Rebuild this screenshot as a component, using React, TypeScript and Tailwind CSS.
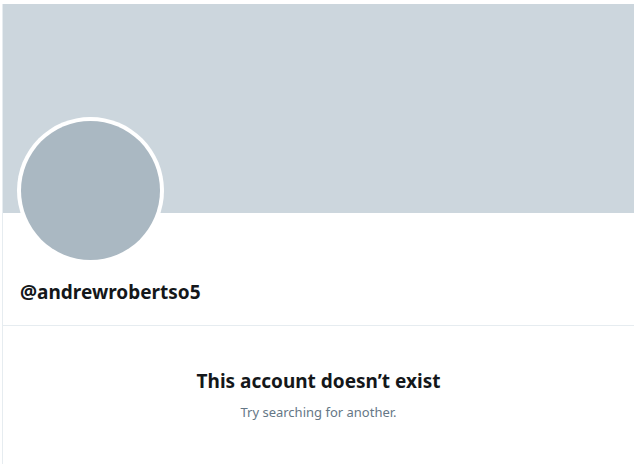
export default function App() {
	return (
		<div className="w-[634px] h-[464px] bg-white pt-1 overflow-hidden" style={{ fontFamily: '"Noto Sans", "Open Sans", sans-serif' }}>
			<div className="ml-[2px] h-full border-l border-[#e6ecf0] flex flex-col">
				{/* Баннер */}
				<div className="h-[209px] bg-[#ccd6dd] shrink-0" />

				{/* Аватар и имя */}
				<div className="relative px-[17px] pt-[67px] pb-[21px] border-b border-[#e6ecf0]">
					<div className="absolute left-[14px] top-[-96px] w-[147px] h-[147px] rounded-full bg-white p-[4px]">
						<div className="w-full h-full rounded-full bg-[#aab8c2]" />
					</div>
					<div className="text-[19px] font-bold text-[#14171a] leading-[24px]">@andrewrobertso5</div>
				</div>

				{/* Сообщение */}
				<div className="flex flex-col items-center pt-[43px]">
					<div className="text-[19px] font-bold text-[#14171a] leading-[24px]">This account doesn’t exist</div>
					<div className="mt-[9px] text-[13px] text-[#657786] leading-[20px]">Try searching for another.</div>
				</div>
			</div>
		</div>
	);
}
